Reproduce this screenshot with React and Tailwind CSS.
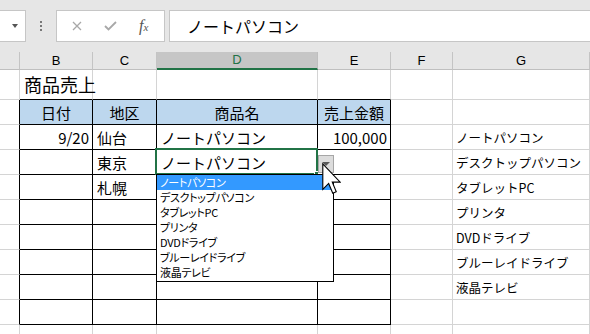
import React from 'react';

const COLS = ['A', 'B', 'C', 'D', 'E', 'F', 'G'];
const TABLE = ['B', 'C', 'D', 'E'];

const rows = [
  { B: '日付', C: '地区', D: '商品名', E: '売上金額', head: true },
  { B: '9/20', C: '仙台', D: 'ノートパソコン', E: '100,000', G: 'ノートパソコン' },
  { C: '東京', D: 'ノートパソコン', G: 'デスクトップパソコン' },
  { C: '札幌', G: 'タブレットPC' },
  { G: 'プリンタ' },
  { G: 'DVDドライブ' },
  { G: 'ブルーレイドライブ' },
  { G: '液晶テレビ' },
  {},
];

const options = ['ノートパソコン', 'デスクトップパソコン', 'タブレットPC', 'プリンタ', 'DVDドライブ', 'ブルーレイドライブ', '液晶テレビ'];

function FormulaBar() {
  return (
    <div className="h-[52px] bg-[#e6e6e6] pt-[10px]">
      <div className="flex h-[32px]">
        <div className="ml-[-1px] w-[27px] bg-white border border-[#c6c6c6] flex items-center justify-end pr-[7px]">
          <div className="w-0 h-0 border-l-[3px] border-r-[3px] border-t-[4px] border-l-transparent border-r-transparent border-t-[#555]" />
        </div>
        <div className="w-[30px] flex flex-col items-center justify-center gap-[2px]">
          <div className="w-[2px] h-[2px] bg-[#777]" />
          <div className="w-[2px] h-[2px] bg-[#777]" />
          <div className="w-[2px] h-[2px] bg-[#777]" />
        </div>
        <div className="w-[109px] bg-white border border-[#c6c6c6] flex items-center pl-[15px] gap-[22px]">
          <svg width="10" height="10" viewBox="0 0 10 10">
            <path d="M1 1 L9 9 M9 1 L1 9" stroke="#a8a8a8" strokeWidth="1.3" />
          </svg>
          <svg width="13" height="10" viewBox="0 0 13 10">
            <path d="M1 5 L4.5 8.5 L12 1" stroke="#a8a8a8" strokeWidth="1.8" fill="none" />
          </svg>
          <span className="font-['Liberation_Serif',serif] italic text-[16px] leading-none text-[#555]">
            f<span className="text-[11px]">x</span>
          </span>
        </div>
        <div className="w-[4px]" />
        <div className="flex-1 mr-[-1px] bg-white border border-[#c6c6c6] flex items-center pl-[17px] font-['Noto_Sans_CJK_JP',sans-serif] text-[16px] text-black">
          ノートパソコン
        </div>
      </div>
    </div>
  );
}

function ColumnHeader() {
  return (
    <>
      {COLS.map((c) =>
        c === 'D' ? (
          <div key={c} className="h-[18px] bg-[#c6c6c6] border-r border-r-[#bfbfbf] border-b-2 border-b-[#217346] flex items-center justify-center font-['Liberation_Sans',sans-serif] text-[13px] text-[#217346]">
            {c}
          </div>
        ) : (
          <div key={c} className="h-[18px] bg-[#e6e6e6] border-r border-r-[#c4c4c4] border-b border-b-[#bfbfbf] flex items-center justify-center font-['Liberation_Sans',sans-serif] text-[13px] text-black">
            {c === 'A' ? '' : c}
          </div>
        )
      )}
    </>
  );
}

function TitleRow() {
  return (
    <>
      {COLS.map((c) => (
        <div
          key={c}
          className={
            'h-[30px] border-r border-b border-r-[#d4d4d4] flex items-center pb-[2px] ' +
            (TABLE.includes(c) ? 'border-b-black' : 'border-b-[#d4d4d4]')
          }
        >
          {c === 'B' && (
            <span className="pl-[4px] whitespace-nowrap font-['Noto_Sans_CJK_JP',sans-serif] text-[18px] leading-none text-black">
              商品売上
            </span>
          )}
        </div>
      ))}
    </>
  );
}

function cellAlign(row, c) {
  if (row.head) return 'justify-center';
  if (c === 'B' || c === 'E') return 'justify-end pr-[3px]';
  if (c === 'G') return 'justify-start pl-[3px] pt-[2px]';
  return 'justify-start pl-[4px]';
}

function TableRows() {
  return rows.map((row, i) =>
    COLS.map((c) => {
      const inTable = TABLE.includes(c);
      const cls = [
        'h-[25px] border-r border-b flex items-center overflow-visible whitespace-nowrap',
        inTable || c === 'A' ? 'border-r-black' : 'border-r-[#d4d4d4]',
        inTable ? 'border-b-black' : 'border-b-[#d4d4d4]',
        row.head && inTable ? 'bg-[#bdd7ee]' : 'bg-white',
        cellAlign(row, c),
        c === 'G'
          ? "font-['Noto_Sans_CJK_JP',sans-serif] text-[12.5px] leading-none text-black"
          : "font-['Noto_Sans_CJK_JP',sans-serif] text-[15px] leading-none text-black",
      ].join(' ');
      return (
        <div key={i + c} className={cls}>
          {row[c]}
        </div>
      );
    })
  );
}

function LastRow() {
  return (
    <>
      {COLS.map((c) => (
        <div key={c} className="h-[9px] border-r border-r-[#d4d4d4]" />
      ))}
    </>
  );
}

function Overlays() {
  return (
    <>
      <div className="absolute left-[155px] top-[96px] w-[163px] h-[27px] border-2 border-[#217346]" />
      <div className="absolute left-[314px] top-[119px] w-[5px] h-[5px] bg-[#217346] border border-white" />
      <div className="absolute left-[156px] top-[122px] w-[178px] h-[108px] bg-white border border-black">
        {options.map((o, i) => (
          <div
            key={o}
            className={
              "h-[15px] flex items-center pl-[3px] whitespace-nowrap font-['Noto_Sans_CJK_JP',sans-serif] text-[11px] leading-none [font-feature-settings:'palt'] tracking-[-0.3px] " +
              (i === 0 ? 'bg-[#3399ff] text-white' : 'text-black')
            }
          >
            {o}
          </div>
        ))}
      </div>
      <div className="absolute left-[318px] top-[103px] w-[16px] h-[18px] bg-[#dcdcdc] border border-[#a6a6a6] flex items-center justify-center">
        <div className="w-0 h-0 border-l-[4px] border-r-[4px] border-t-[4px] border-l-transparent border-r-transparent border-t-[#595959]" />
      </div>
      <svg className="absolute left-[322px] top-[111px]" width="19" height="32" viewBox="0 0 12 20">
        <path
          d="M0.5 0.5 L0.5 16.5 L4.2 12.8 L6.8 19 L9 18 L6.5 12 L11.5 12 Z"
          fill="white"
          stroke="black"
          strokeWidth="0.7"
          strokeLinejoin="miter"
        />
      </svg>
    </>
  );
}

export default function App() {
  return (
    <div className="w-[590px] h-[334px] overflow-hidden bg-white">
      <FormulaBar />
      <div className="relative grid grid-cols-[20px_73px_64px_161px_73px_62px_137px]">
        <ColumnHeader />
        <TitleRow />
        <TableRows />
        <LastRow />
        <Overlays />
      </div>
    </div>
  );
}
